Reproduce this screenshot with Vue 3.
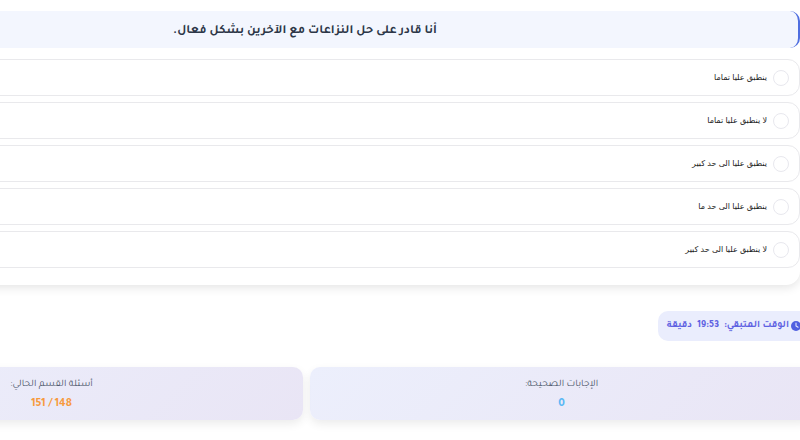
<script setup>
const options = [
  'ينطبق عليا تماما',
  'لا ينطبق عليا تماما',
  'ينطبق عليا الى حد كبير',
  'ينطبق عليا الى حد ما',
  'لا ينطبق عليا الى حد كبير'
]
</script>

<template>
  <div class="page" dir="rtl">
    <section class="panel">
      <h2 class="question">أنا قادر على حل النزاعات مع الآخرين بشكل فعال.</h2>
      <ul class="options">
        <li v-for="o in options" :key="o" class="option">
          <span class="radio"></span>
          <span class="label">{{ o }}</span>
        </li>
      </ul>
    </section>
    <div class="timer-row">
      <div class="timer">
        <svg class="clock" viewBox="0 0 24 24" aria-hidden="true">
          <circle cx="12" cy="12" r="12" fill="#4f5fe0" />
          <path d="M12 5v7l5 3" fill="none" stroke="#eaedfd" stroke-width="2.5" stroke-linecap="round" />
        </svg>
        <span>الوقت المتبقي:</span>
        <span>19:53</span>
        <span>دقيقة</span>
      </div>
    </div>
    <div class="stats">
      <div class="stat">
        <div class="stat-title">الإجابات الصحيحة:</div>
        <div class="stat-value blue">0</div>
      </div>
      <div class="stat">
        <div class="stat-title">أسئلة القسم الحالي:</div>
        <div class="stat-value orange">148 / 151</div>
      </div>
    </div>
  </div>
</template>

<style>
html, body { margin: 0; background: #fff; overflow: hidden; }
</style>

<style scoped>
.page {
  width: 800px;
  height: 440px;
  overflow: hidden;
  background: #fff;
  font-family: "Tajawal", "DejaVu Sans", sans-serif;
  box-sizing: border-box;
}
.panel {
  width: 988px;
  box-sizing: border-box;
  padding: 11px 0 17px;
  border-radius: 0 0 14px 14px;
  box-shadow: 0 3px 10px rgba(0, 0, 0, 0.1);
  background: #fff;
}
.question {
  margin: 0;
  height: 37px;
  padding-top: 2px;
  line-height: 37px;
  box-sizing: border-box;
  text-align: center;
  font-size: 12.5px;
  font-weight: 700;
  color: #2d3748;
  background: #f3f6fe;
  border-right: 2px solid #4f6ee0;
  border-radius: 10px;
}
.options {
  list-style: none;
  margin: 11px 0 0;
  padding: 0;
  display: flex;
  flex-direction: column;
  gap: 6px;
}
.option {
  height: 37px;
  box-sizing: border-box;
  display: flex;
  align-items: center;
  gap: 6px;
  padding-right: 10px;
  border: 1px solid #e9e9ec;
  border-radius: 12px;
  background: #fff;
}
.radio {
  width: 16px;
  height: 16px;
  flex: none;
  border: 1px solid #e8e8ee;
  border-radius: 50%;
  box-sizing: border-box;
}
.label {
  font-family: "Liberation Sans", "DejaVu Sans", sans-serif;
  font-size: 8px;
  color: #222;
}
.timer-row {
  display: flex;
  margin-top: 26px;
}
.timer {
  width: 152px;
  flex: none;
  height: 30px;
  box-sizing: border-box;
  display: flex;
  align-items: center;
  gap: 5px;
  padding-right: 9px;
  margin-right: -10px;
  border-radius: 10px;
  background: #eaedfd;
  color: #5f62e2;
  font-size: 10px;
  font-weight: 700;
}
.clock {
  width: 10px;
  height: 10px;
  flex: none;
  margin-left: -3px;
}
.stats {
  display: flex;
  gap: 7px;
  margin-top: 26px;
  margin-right: -13px;
  width: 1013px;
}
.stat {
  flex: 1;
  height: 53px;
  box-sizing: border-box;
  padding-top: 12px;
  text-align: center;
  border-radius: 10px;
  background: linear-gradient(135deg, #eceffc, #e9e5f5);
  box-shadow: 0 4px 10px rgba(0, 0, 0, 0.08);
}
.stat-title {
  font-size: 10px;
  color: #4a5568;
  line-height: 12px;
}
.stat-value {
  margin-top: 7px;
  font-size: 11.7px;
  font-weight: 700;
  line-height: 12px;
}
.blue { color: #5ab8f5; }
.orange { color: #f79a3e; }
</style>
